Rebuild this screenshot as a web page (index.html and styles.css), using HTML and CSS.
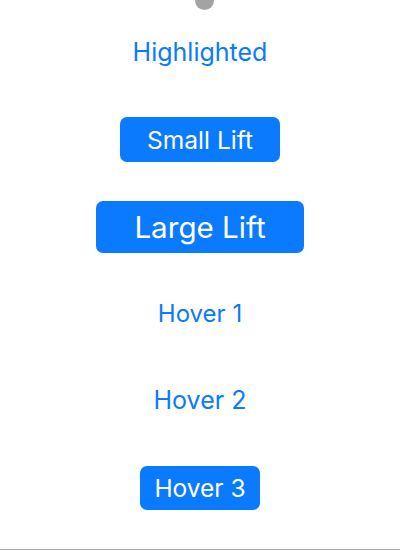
FILE: index.html
```html
<!DOCTYPE html>
<html>
<head>
<meta charset="utf-8">
<link rel="stylesheet" href="styles.css">
</head>
<body>
<div class="screen">
  <div class="knob"></div>
  <div class="list">
    <div class="row"><span class="link highlighted">Highlighted</span></div>
    <div class="row"><span class="btn btn-small">Small Lift</span></div>
    <div class="row"><span class="btn btn-large">Large Lift</span></div>
    <div class="row"><span class="link hover1">Hover 1</span></div>
    <div class="row"><span class="link hover2">Hover 2</span></div>
    <div class="row"><span class="btn btn-hover3">Hover 3</span></div>
  </div>
</div>
</body>
</html>
```
FILE: styles.css
```css
html, body {
  margin: 0;
  padding: 0;
  background: #ffffff;
}
body {
  font-family: Inter, "Noto Sans", sans-serif;
}
.screen {
  position: relative;
  width: 400px;
  height: 549px;
  border-bottom: 1px solid #a9a9a9;
  overflow: hidden;
}
.knob {
  position: absolute;
  left: 195px;
  top: -9px;
  width: 19px;
  height: 19px;
  border-radius: 50%;
  background: #a3a3a3;
}
.list {
  display: flex;
  flex-direction: column;
  padding-top: 9px;
}
.row {
  height: 87px;
  display: flex;
  align-items: center;
  justify-content: center;
}
.link {
  color: #0a7aff;
  font-size: 24px;
  line-height: 1;
}
.highlighted {
  font-size: 25px;
}
.hover2 {
  font-size: 25px;
}
.btn {
  background: #0a7aff;
  color: #ffffff;
  border-radius: 7px;
  display: flex;
  align-items: center;
  justify-content: center;
  box-sizing: border-box;
}
.btn-small {
  width: 160px;
  height: 45px;
  font-size: 24.6px;
}
.btn-large {
  width: 208px;
  height: 52px;
  font-size: 29.6px;
}
.btn-hover3 {
  width: 120px;
  height: 44px;
  font-size: 24.5px;
}
```
